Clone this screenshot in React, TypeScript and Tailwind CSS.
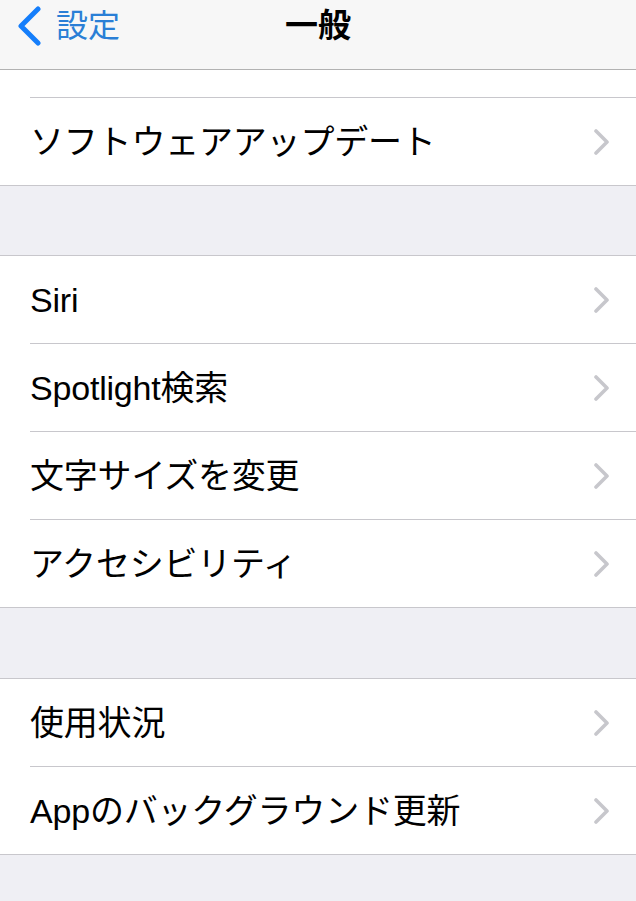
import React from "react";

const font = { fontFamily: '"Liberation Sans", "Noto Sans CJK JP", sans-serif' };

function Chevron() {
  return (
    <svg width="20" height="26" viewBox="0 0 20 26" className="shrink-0">
      <polyline points="4,2 15,13 4,24" fill="none" stroke="#c7c7cc" strokeWidth="3.6" strokeLinecap="round" strokeLinejoin="round" />
    </svg>
  );
}

function Row({ label, last }: { label: string; last?: boolean }) {
  return (
    <div className="pl-[30px]">
      <div className={`flex items-center pr-[24px] ${last ? "h-[87px]" : "h-[88px] border-b border-[#c8c7cc]"}`}>
        <span className="flex-1 text-[34px] text-black leading-none tracking-[-0.2px]">{label}</span>
        <Chevron />
      </div>
    </div>
  );
}

export default function App() {
  return (
    <div className="w-[636px] h-[901px] bg-[#efeff4] overflow-hidden" style={font}>
      <div className="h-[70px] bg-[#f7f7f7] border-b border-[#b2b2b2] relative">
        <div className="absolute left-[16px] top-[6px] flex items-center h-[40px]">
          <svg width="26" height="40" viewBox="0 0 26 40">
            <polyline points="22,3 5,20 22,37" fill="none" stroke="#157efb" strokeWidth="5" strokeLinecap="round" strokeLinejoin="round" />
          </svg>
          <span className="ml-[14px] text-[32px] text-[#2a7fd6] leading-none">設定</span>
        </div>
        <div className="absolute left-0 right-0 top-[6px] h-[38px] flex justify-center items-center">
          <span className="text-[33px] font-bold text-black leading-none">一般</span>
        </div>
      </div>
      <div className="bg-white border-b border-[#c8c7cc]">
        <div className="pl-[30px]">
          <div className="h-[28px] border-b border-[#c8c7cc]" />
        </div>
        <Row label="ソフトウェアアップデート" last />
      </div>
      <div className="h-[69px]" />
      <div className="bg-white border-y border-[#c8c7cc]">
        <Row label="Siri" />
        <Row label="Spotlight検索" />
        <Row label="文字サイズを変更" />
        <Row label="アクセシビリティ" last />
      </div>
      <div className="h-[70px]" />
      <div className="bg-white border-y border-[#c8c7cc]">
        <Row label="使用状況" />
        <Row label="Appのバックグラウンド更新" last />
      </div>
    </div>
  );
}
